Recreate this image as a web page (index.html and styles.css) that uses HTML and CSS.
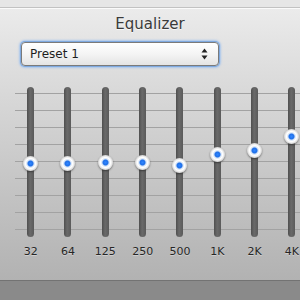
FILE: index.html
```html
<!DOCTYPE html>
<html lang="en">
<head>
    <meta charset="UTF-8">
    <title>Equalizer</title>
    <link rel="stylesheet" href="styles.css">
</head>
<body>

<div class="topbar"></div>

<div class="panel">
    <div class="title">Equalizer</div>

    <div class="preset">
        <span class="preset-label">Preset 1</span>
        <svg class="preset-arrows" width="7" height="12" viewBox="0 0 7 12">
            <path d="M3.5 0.5 L6.5 4.5 L0.5 4.5 Z" fill="#222"/>
            <path d="M3.5 11.5 L6.5 7.5 L0.5 7.5 Z" fill="#222"/>
        </svg>
    </div>

    <div class="eq">
        <div class="band">
            <div class="track"><span class="knob" style="top: 69px"></span></div>
            <div class="freq">32</div>
        </div>
        <div class="band">
            <div class="track"><span class="knob" style="top: 69px"></span></div>
            <div class="freq">64</div>
        </div>
        <div class="band">
            <div class="track"><span class="knob" style="top: 68px"></span></div>
            <div class="freq">125</div>
        </div>
        <div class="band">
            <div class="track"><span class="knob" style="top: 68px"></span></div>
            <div class="freq">250</div>
        </div>
        <div class="band">
            <div class="track"><span class="knob" style="top: 71px"></span></div>
            <div class="freq">500</div>
        </div>
        <div class="band">
            <div class="track"><span class="knob" style="top: 60px"></span></div>
            <div class="freq">1K</div>
        </div>
        <div class="band">
            <div class="track"><span class="knob" style="top: 56px"></span></div>
            <div class="freq">2K</div>
        </div>
        <div class="band">
            <div class="track"><span class="knob" style="top: 42px"></span></div>
            <div class="freq">4K</div>
        </div>
    </div>
</div>

<div class="footer"></div>

</body>
</html>
```

FILE: styles.css
```css
body {
    margin: 0;
    width: 300px;
    height: 300px;
    overflow: hidden;
    font-family: "DejaVu Sans", sans-serif;
    background-color: #8a8a8a;
}

.topbar {
    height: 7px;
    background-color: #e6e6e6;
    border-bottom: 1px solid #c2c2c2;
}

.panel {
    height: 271px;
    border-top: 1px solid #fafafa;
    border-bottom: 1px solid #737373;
    background: linear-gradient(to bottom, #ebebeb 0%, #d6d6d6 35%, #c2c2c2 70%, #b2b2b2 100%);
    overflow: hidden;
}

.title {
    text-align: center;
    font-size: 15px;
    line-height: 18px;
    margin-top: 6px;
    color: #3a3a3a;
    text-shadow: 0 1px 0 rgba(255, 255, 255, 0.7);
}

.preset {
    display: flex;
    align-items: center;
    justify-content: space-between;
    width: 180px;
    height: 22px;
    margin: 9px 0 0 21px;
    padding: 0 8px 0 8px;
    border: 1px solid #7a7a7a;
    border-radius: 4px;
    background: linear-gradient(to bottom, #ffffff 0%, #f4f4f4 50%, #e4e4e4 100%);
    box-shadow: 0 0 0 1px #7fa9df, 0 0 2px 2px #a9c6ec;
}

.preset-label {
    font-size: 12px;
    color: #1e1e1e;
}

.preset-arrows {
    display: block;
    margin-right: 2px;
}

.eq {
    display: flex;
    margin-top: 21px;
    padding-left: 12px;
    background-image: repeating-linear-gradient(to bottom, #a2a2a2 0, #a2a2a2 1px, transparent 1px, transparent 17px);
    background-position: 15px 6px;
    background-size: 285px 137px;
    background-repeat: no-repeat;
}

.band {
    width: 37.33px;
    flex-shrink: 0;
    display: flex;
    flex-direction: column;
    align-items: center;
}

.track {
    position: relative;
    width: 7px;
    height: 150px;
    border-radius: 4px;
    background: linear-gradient(to right, #4f4f4f 0%, #6a6a6a 45%, #5a5a5a 100%);
}

.knob {
    position: absolute;
    left: -4px;
    width: 15px;
    height: 15px;
    border-radius: 50%;
    background: radial-gradient(circle at 50% 50%, #2f86ff 0, #1f6fe8 2.5px, #cfe0f6 3.5px, #ffffff 5px, #f0f0f0 6px, #cfcfcf 7.5px);
    box-shadow: 0 1px 2px rgba(0, 0, 0, 0.45);
}

.freq {
    margin-top: 8px;
    font-size: 11px;
    line-height: 14px;
    color: #262626;
    text-shadow: 0 1px 0 rgba(255, 255, 255, 0.35);
}

.footer {
    height: 20px;
}
```
